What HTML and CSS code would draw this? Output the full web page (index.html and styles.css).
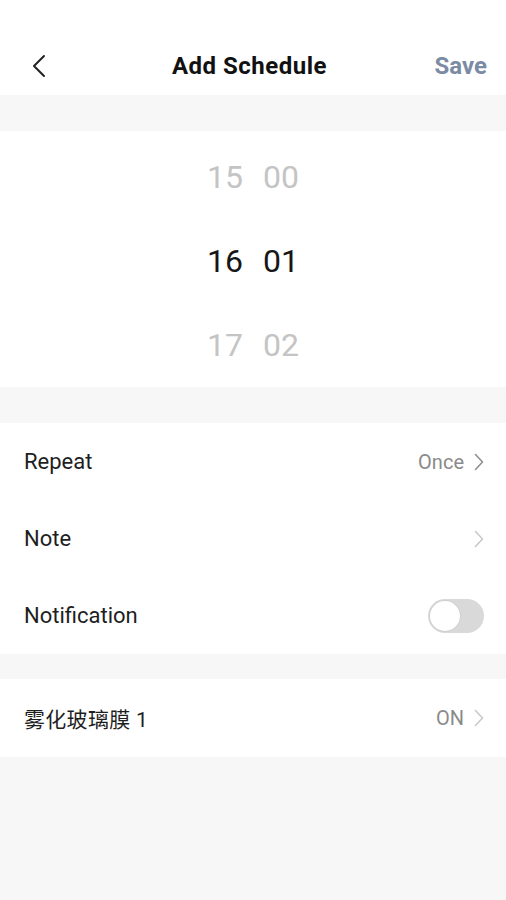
FILE: index.html
```html
<!DOCTYPE html>
<html>
<head>
<meta charset="utf-8">
<link rel="stylesheet" href="styles.css">
</head>
<body>
<div class="app">
  <header class="topbar">
    <span class="back">
      <svg width="14" height="24" viewBox="0 0 14 24"><path d="M12 2 L2 12 L12 22" fill="none" stroke="#222" stroke-width="2" stroke-linecap="round" stroke-linejoin="round"/></svg>
    </span>
    <h1 class="title">Add Schedule</h1>
    <span class="save">Save</span>
  </header>
  <div class="gap gap-top"></div>
  <section class="picker">
    <div class="col">
      <div class="num dim">15</div>
      <div class="num sel">16</div>
      <div class="num dim">17</div>
    </div>
    <div class="col">
      <div class="num dim">00</div>
      <div class="num sel">01</div>
      <div class="num dim">02</div>
    </div>
  </section>
  <div class="gap gap-mid"></div>
  <section class="list">
    <div class="row">
      <span class="label">Repeat</span>
      <span class="right"><span class="value">Once</span><svg class="chev dark" width="10" height="18" viewBox="0 0 10 18"><path d="M1.5 1.5 L8.5 9 L1.5 16.5" fill="none" stroke-width="1.6" stroke-linecap="round" stroke-linejoin="round"/></svg></span>
    </div>
    <div class="row">
      <span class="label">Note</span>
      <span class="right"><svg class="chev light" width="10" height="18" viewBox="0 0 10 18"><path d="M1.5 1.5 L8.5 9 L1.5 16.5" fill="none" stroke-width="1.6" stroke-linecap="round" stroke-linejoin="round"/></svg></span>
    </div>
    <div class="row">
      <span class="label">Notification</span>
      <span class="toggle"><span class="knob"></span></span>
    </div>
  </section>
  <div class="gap gap-small"></div>
  <section class="list">
    <div class="row device">
      <span class="label cjk">雾化玻璃膜 1</span>
      <span class="right"><span class="value">ON</span><svg class="chev light" width="10" height="18" viewBox="0 0 10 18"><path d="M1.5 1.5 L8.5 9 L1.5 16.5" fill="none" stroke-width="1.6" stroke-linecap="round" stroke-linejoin="round"/></svg></span>
    </div>
  </section>
</div>
</body>
</html>
```
FILE: styles.css
```css
html, body {
  margin: 0;
  padding: 0;
  background: #f7f7f7;
  font-family: Roboto, "Noto Sans", "Noto Sans CJK SC", sans-serif;
}
.app {
  width: 506px;
  min-height: 900px;
  background: #f7f7f7;
}
.topbar {
  height: 95px;
  background: #ffffff;
  display: flex;
  align-items: center;
  justify-content: space-between;
  padding: 36px 19px 0 32px;
  box-sizing: border-box;
}
.back {
  display: flex;
  align-items: center;
  width: 40px;
}
.title {
  margin: 0;
  font-size: 24px;
  font-weight: 700;
  color: #111;
  letter-spacing: 0.5px;
}
.save {
  width: 60px;
  text-align: right;
  font-size: 24px;
  font-weight: 700;
  color: #7c8ba4;
}
.gap { background: #f7f7f7; }
.gap-top { height: 36px; }
.gap-mid { height: 36px; }
.gap-small { height: 25px; }
.picker {
  background: #fff;
  display: flex;
  justify-content: center;
  gap: 20px;
  padding: 4px 0 0 0;
}
.col {
  display: flex;
  flex-direction: column;
}
.num {
  height: 84px;
  display: flex;
  align-items: center;
  justify-content: center;
  font-size: 32px;
  font-weight: 400;
}
.num.dim { color: #c4c4c4; }
.num.sel { color: #161616; }
.list { background: #fff; }
.row {
  height: 77px;
  display: flex;
  align-items: center;
  justify-content: space-between;
  padding: 0 22px 0 24px;
  box-sizing: border-box;
}
.row.device { height: 78px; }
.label {
  font-size: 22px;
  color: #1e1e1e;
}
.label.cjk {
  font-family: Roboto, "Noto Sans CJK SC", sans-serif;
  font-size: 21px;
  letter-spacing: 0.3px;
}
.right {
  display: flex;
  align-items: center;
  gap: 10px;
}
.value {
  font-size: 20px;
  color: #8a8a8a;
}
.chev.dark path { stroke: #8f8f8f; }
.chev.light path { stroke: #c9c9c9; }
.toggle {
  width: 56px;
  height: 34px;
  border-radius: 17px;
  background: #d9d9d9;
  display: flex;
  align-items: center;
  padding: 0 2px;
  box-sizing: border-box;
}
.knob {
  width: 30px;
  height: 30px;
  border-radius: 50%;
  background: #fff;
  box-shadow: 0 0 0 1px #d0d0d0;
}
```
